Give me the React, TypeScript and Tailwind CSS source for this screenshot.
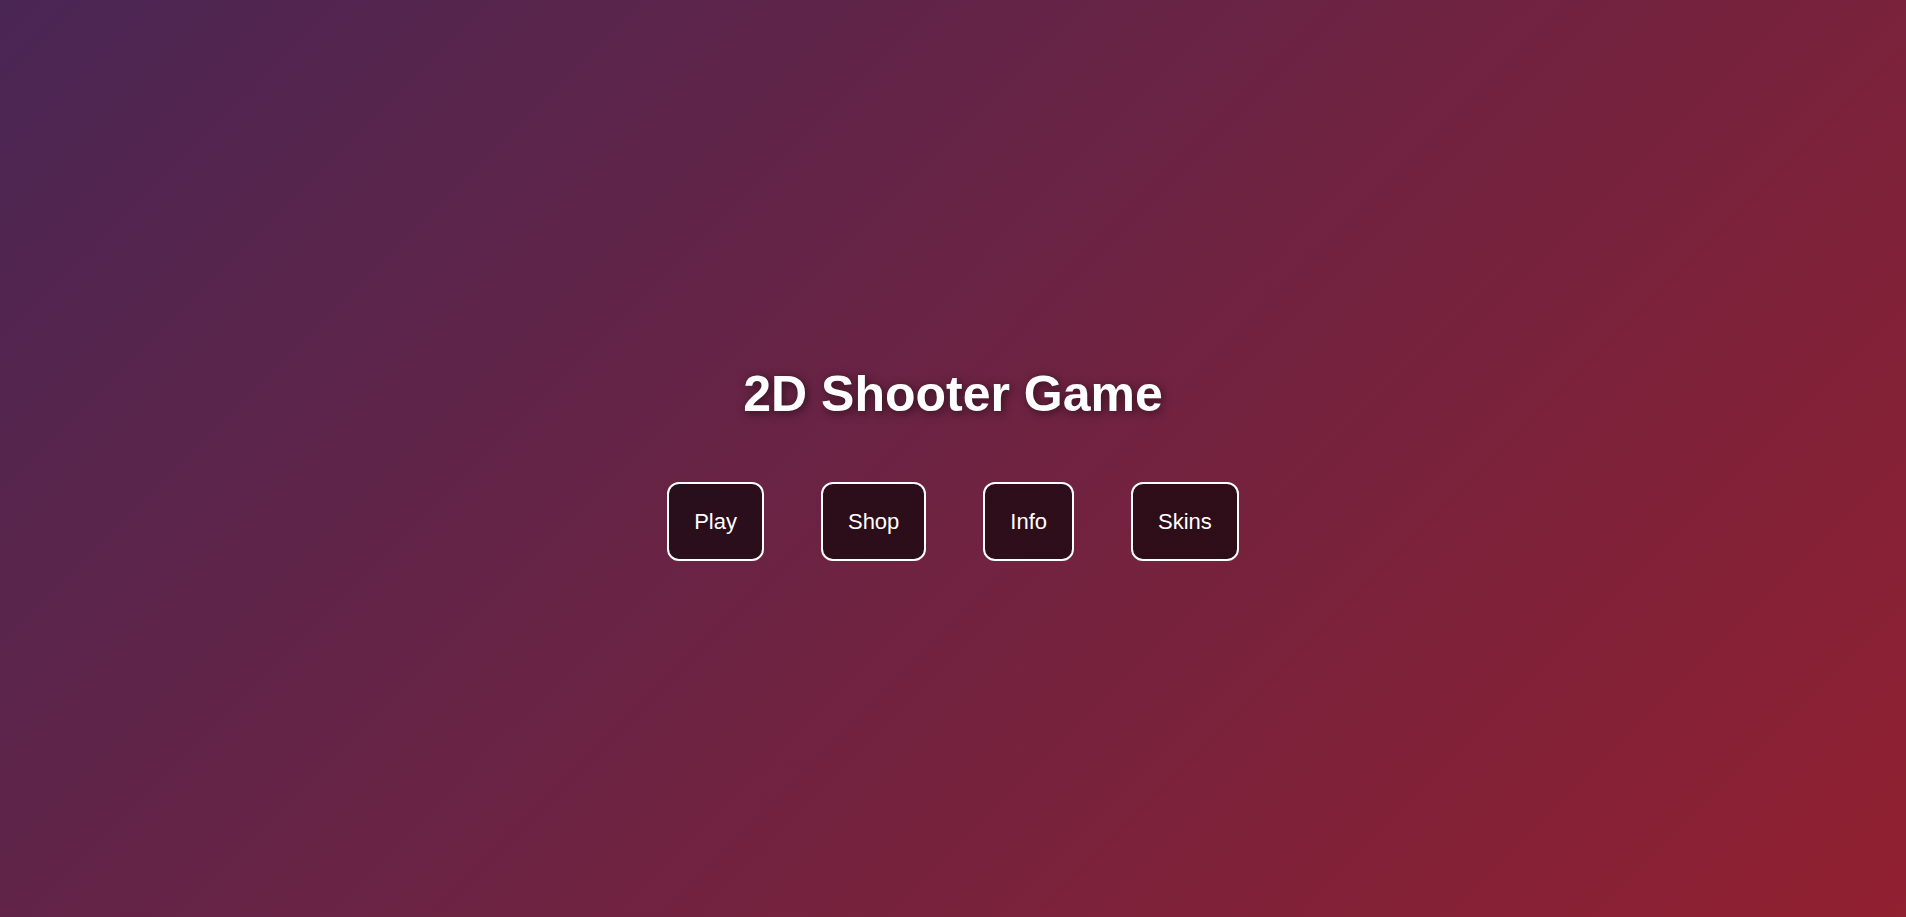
import React from "react";

export default function App() {
  const items = ["Play", "Shop", "Info", "Skins"];
  return (
    <div className="min-h-screen w-full flex flex-col items-center justify-center bg-[linear-gradient(135deg,#4a2654,#912030)] font-['Liberation_Sans',Arial,sans-serif] text-white pt-[10px]">
      <h1 className="text-[50px] font-bold leading-[1.15] [text-shadow:2px_2px_10px_rgba(0,0,0,0.55)] m-0">
        2D Shooter Game
      </h1>
      <div className="flex flex-row gap-[57px] mt-[58px]">
        {items.map((t) => (
          <button
            key={t}
            className="px-[25px] py-[25px] text-[22px] leading-[1.15] text-white bg-[rgba(0,0,0,0.6)] border-2 border-white rounded-[12px]"
          >
            {t}
          </button>
        ))}
      </div>
    </div>
  );
}
